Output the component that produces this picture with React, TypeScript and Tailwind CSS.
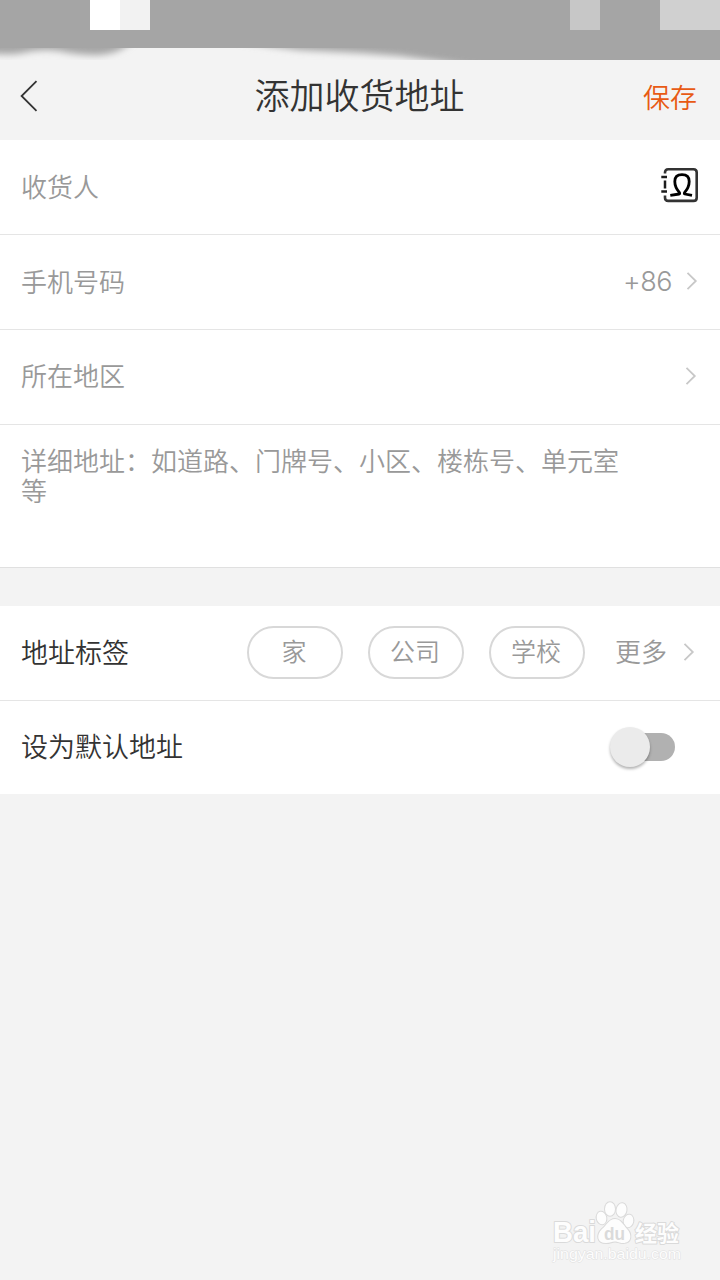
import type { ReactNode } from "react"

const tags = ["家", "公司", "学校"]

function Chevron({ className = "" }: { className?: string }) {
  return (
    <svg className={`h-5 w-3 shrink-0 ${className}`} viewBox="0 0 12 20" fill="none" stroke="#c8c8c8" strokeWidth="1.8">
      <path d="M1.5 1.8 L9.8 10 L1.5 18.2" />
    </svg>
  )
}

function BackIcon() {
  return (
    <svg className="h-8 w-5" viewBox="0 0 20 32" fill="none" stroke="#333" strokeWidth="1.8">
      <path d="M16.5 1.2 L1.6 16 L16.5 30.8" />
    </svg>
  )
}

function ContactIcon() {
  return (
    <svg className="h-[38px] w-10" viewBox="0 0 40 38" fill="none">
      <path
        d="M5 7.5 V6.5 Q5 3.3 8.2 3.3 H33.5 Q36.7 3.3 36.7 6.5 V31.7 Q36.7 34.9 33.5 34.9 H8.2 Q5 34.9 5 31.7 V29.5"
        stroke="#333"
        strokeWidth="2.6"
      />
      <path d="M5 14.5 V22.5 M1.3 11 H7 M1.3 25.6 H7" stroke="#1c1c1c" strokeWidth="2.5" />
      <path
        d="M10.3 29.4 L19.2 28 C19.8 27.8 19.8 27 19.3 26.3 C16.3 22.8 14.8 19 14.8 15.4 C14.8 11 17.6 8.6 22 8.6 C26.4 8.6 29.2 11 29.2 15.4 C29.2 19 27.7 22.8 24.7 26.3 C24.2 27 24.2 27.8 24.8 28 L32 29.4"
        stroke="#000"
        strokeWidth="2.8"
        strokeLinejoin="round"
      />
    </svg>
  )
}

function StatusBar() {
  return (
    <div className="flex h-12 items-start bg-[#a5a5a5]">
      <div className="ml-[90px] h-[30px] w-[30px] bg-white" />
      <div className="h-[30px] w-[30px] bg-[#f2f2f2]" />
      <div className="ml-auto h-[30px] w-[30px] bg-[#c7c7c7]" />
      <div className="ml-[60px] h-[30px] w-[60px] bg-[#d0d0d0]" />
    </div>
  )
}

// soft edge below the status bar
function Smudge() {
  return (
    <svg className="block h-3 w-full" viewBox="0 0 720 12">
      <defs>
        <filter id="soft" x="-5%" y="-50%" width="110%" height="200%">
          <feGaussianBlur stdDeviation="3.5" />
        </filter>
      </defs>
      <g fill="#a5a5a5" filter="url(#soft)">
        <path d="M-20 -10 H134 Q124 5 98 7 Q76 7 60 3 Q40 0 22 5 Q8 8 -20 4 Z" />
        <path d="M240 -10 H740 V24 H500 Q450 14 400 8 Q350 4 300 2 Q270 -1 240 -7 Z" />
      </g>
    </svg>
  )
}

function Row({ children, last = false }: { children: ReactNode; last?: boolean }) {
  return (
    <div className={`flex items-center bg-white pb-0.5 pl-[21px] ${last ? "h-[93px]" : "h-[95px] border-b border-[#e5e5e5]"}`}>
      {children}
    </div>
  )
}

function Watermark() {
  return (
    <svg className="absolute top-[1198px] left-[550px] h-[68px] w-[136px]" viewBox="0 0 136 68">
      <g fill="#fdfdfd" stroke="#dadada" strokeWidth="2" strokeLinejoin="round" style={{ paintOrder: "stroke" }}>
        <ellipse cx="51.5" cy="20" rx="4.8" ry="6.3" transform="rotate(-12 51.5 20)" />
        <ellipse cx="60" cy="11" rx="5" ry="6.8" />
        <ellipse cx="71.5" cy="12" rx="5" ry="6.8" transform="rotate(10 71.5 12)" />
        <ellipse cx="78.5" cy="23" rx="4.8" ry="6.3" transform="rotate(12 78.5 23)" />
        <path d="M65 21 C70 21 73 26 77 31 C82 36 82 45 73 45 C69 45 68 43.5 65 43.5 C62 43.5 60 45 56 45 C47 45 46 37 52 31 C57 27 59 21 65 21 Z" />
        <text x="3" y="44" fontSize="29" fontWeight="700" textLength="43" lengthAdjust="spacingAndGlyphs" fontFamily="Liberation Sans, sans-serif">
          Bai
        </text>
        <text x="85" y="43" fontSize="22" fontWeight="700" textLength="44" fontFamily="Noto Sans CJK SC, sans-serif">
          经验
        </text>
        <text x="3" y="61" fontSize="15" strokeWidth="1" stroke="#e0e0e0" textLength="128" lengthAdjust="spacingAndGlyphs" fontFamily="Liberation Sans, sans-serif">
          jingyan.baidu.com
        </text>
      </g>
      <text x="54" y="42" fontSize="19" fontWeight="700" fill="#dadada" textLength="21" lengthAdjust="spacingAndGlyphs" fontFamily="Liberation Sans, sans-serif">
        du
      </text>
    </svg>
  )
}

export default function App() {
  return (
    <div className="relative h-[1280px] w-[720px] overflow-hidden bg-[#f3f3f3] font-['Noto_Sans_CJK_SC',sans-serif] text-[26px] font-[350] text-[#999]">
      <StatusBar />
      <Smudge />

      <header className="grid h-20 grid-cols-3 items-center pr-[23px] pb-2 pl-[22px] leading-none">
        <button className="-ml-0.5 justify-self-start" aria-label="返回">
          <BackIcon />
        </button>
        <h1 className="justify-self-center pb-[5px] text-[35px] font-[350] whitespace-nowrap text-[#333]">添加收货地址</h1>
        <button className="justify-self-end text-[27px] text-[#e85a14]">保存</button>
      </header>

      <main className="leading-[30px]">
        <Row>
          <span>收货人</span>
          <span className="mr-5 mb-0.5 ml-auto">
            <ContactIcon />
          </span>
        </Row>
        <Row>
          <span>手机号码</span>
          <span className="mt-0.5 ml-auto font-['Inter',sans-serif] text-[27px] font-light tracking-[-0.5px]">+86</span>
          <Chevron className="mr-[22px] ml-3.5" />
        </Row>
        <Row>
          <span className="mb-0.5">所在地区</span>
          <Chevron className="mr-[23px] ml-auto" />
        </Row>
        <div className="h-[143px] border-b border-[#e0e0e0] bg-white pt-5 pr-[90px] pl-[21px]">
          详细地址：如道路、门牌号、小区、楼栋号、单元室等
        </div>

        <div className="mt-[38px]">
          <Row>
            <span className="text-[27px] text-[#333]">地址标签</span>
            <div className="ml-auto flex gap-[25px] text-[25px]">
              {tags.map((tag) => (
                <button key={tag} className="flex h-[53px] w-24 items-center justify-center rounded-full border-2 border-[#d8d8d8] pr-0.5 pb-1">
                  {tag}
                </button>
              ))}
            </div>
            <span className="mb-0.5 ml-[30px]">更多</span>
            <Chevron className="mr-[25px] ml-4" />
          </Row>
          <Row last>
            <span className="mb-0.5 text-[27px] text-[#333]">设为默认地址</span>
            <button className="mr-[45px] ml-auto flex h-7 w-[61px] items-center rounded-full bg-[#b1b1b1]" aria-label="设为默认地址">
              <span className="-ml-1 h-10 w-10 shrink-0 rounded-full bg-[#ebebeb] shadow-[0_2px_3px_rgba(0,0,0,0.3)]" />
            </button>
          </Row>
        </div>
      </main>

      <Watermark />
    </div>
  )
}
